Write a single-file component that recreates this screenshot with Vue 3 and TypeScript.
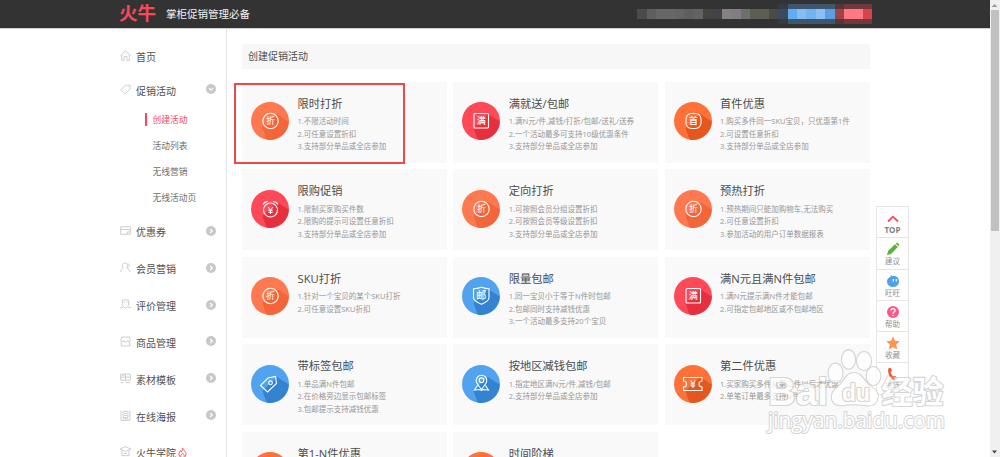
<script setup lang="ts">
type Kind = 'zhe' | 'man' | 'shou' | 'clock' | 'shield' | 'tag' | 'pin' | 'ticket'
interface Card { title: string; tone: string; kind: Kind; lines: string[] }

const cards: Card[] = [
  { title: '限时打折', tone: 'coral', kind: 'zhe', lines: ['1.不限活动时间', '2.可任意设置折扣', '3.支持部分单品或全店参加'] },
  { title: '满就送/包邮', tone: 'red', kind: 'man', lines: ['1.满N元/件,减钱/打折/包邮/送礼/送券', '2.一个活动最多可支持10级优惠条件', '3.支持部分单品或全店参加'] },
  { title: '首件优惠', tone: 'orange', kind: 'shou', lines: ['1.购买多件同一SKU宝贝，只优惠第1件', '2.可设置任意折扣', '3.支持部分单品或全店参加'] },
  { title: '限购促销', tone: 'red', kind: 'clock', lines: ['1.限制买家购买件数', '2.限购的提示可设置任意折扣', '3.支持部分单品或全店参加'] },
  { title: '定向打折', tone: 'coral', kind: 'zhe', lines: ['1.可按照会员分组设置折扣', '2.可按照会员等级设置折扣', '3.支持部分单品或全店参加'] },
  { title: '预热打折', tone: 'coral', kind: 'zhe', lines: ['1.预热期间只能加购物车,无法购买', '2.可任意设置折扣', '3.参加活动的用户订单数据报表'] },
  { title: 'SKU打折', tone: 'coral', kind: 'zhe', lines: ['1.针对一个宝贝的某个SKU打折', '2.可任意设置SKU折扣'] },
  { title: '限量包邮', tone: 'blue', kind: 'shield', lines: ['1.同一宝贝小于等于N件时包邮', '2.包邮同时支持减钱优惠', '3.一个活动最多支持20个宝贝'] },
  { title: '满N元且满N件包邮', tone: 'red', kind: 'man', lines: ['1.满N元提示满N件才能包邮', '2.可指定包邮地区或不包邮地区'] },
  { title: '带标签包邮', tone: 'blue', kind: 'tag', lines: ['1.单品满N件包邮', '2.在价格旁边显示包邮标签', '3.包邮提示支持减钱优惠'] },
  { title: '按地区减钱包邮', tone: 'blue', kind: 'pin', lines: ['1.指定地区满N元/件,减钱/包邮', '2.支持部分单品或全店参加'] },
  { title: '第二件优惠', tone: 'orange', kind: 'ticket', lines: ['1.买家购买多件从第二件以后才优惠', '2.单笔订单最多支持N件'] },
  { title: '第1-N件优惠', tone: 'orange', kind: 'shou', lines: [] },
  { title: '时间阶梯', tone: 'orange', kind: 'zhe', lines: [] },
]

const subs = ['创建活动', '活动列表', '无线营销', '无线活动页']

const menu = [
  { label: '优惠券', d: 'M1 2.500h14v11H1zM1 6.500h14M10.500 10h4.500M10.500 10v3' },
  { label: '会员营销', d: 'M7 1.500a4 4 0 0 1 2.500 7.200c2.500 1 4.500 2.800 5 5.800M7 1.500a4 4 0 0 0-2.300 7.200C2.500 9.700 1.300 11.500 1 14.500M11 2c3 1 3 4.500 1 6' },
  { label: '评价管理', d: 'M3.500 1.500h9v8l-2.500 2.500-2 1.500-2-1.500-2.500-2.500zM0 12.500h4M12 12.500h4M6 4v1.500M10 4v1.500' },
  { label: '商品管理', d: 'M2.500 1.500h11l1.500 5c0 3-3.500 3-3.500 0 0 3-7 3-7 0 0 3-3.500 3-3.500 0zM2 9v5.500h12V9' },
  { label: '素材模板', d: 'M1 1.500h14v9H1zM8 1.500v9M1 6h14M3 3.500h3M1 14h4M8 14h7' },
  { label: '在线海报', d: 'M1.500 1v14h13V1M4.500 2h7v9h-7zM6 5h4M6 8h4M4 13h8' },
]

const pixels = ['#4b4b4b', '#5f5f5f', '#69666b', '#686768', '#626465', '#5d5f62', '#636361', '#444440', '#434347', '#858380', '#847c84', '#6c706f', '#5c5d53', '#5c5e55', '#4a4b48', '#3a4b5e', '#61acf3', '#87bdf3', '#73b3f1', '#8bbff2', '#5a9fe0', '#a04348', '#ff7983', '#ff7983', '#d9434d']
const halo = (i: number): string => (i < 15 ? 'transparent' : i < 16 ? '#333b43' : i < 21 ? '#3e576e' : i < 22 ? '#5a3538' : '#71383d')

const tools = ['TOP', '建议', '旺旺', '帮助', '收藏', '电话']
</script>

<template>
  <div class="page">
    <header class="top">
      <svg class="logo" viewBox="0 0 38 20"><text x="0" y="16.300" textLength="37" lengthAdjust="spacingAndGlyphs">火牛</text></svg>
      <span class="slogan">掌柜促销管理必备</span>
      <div class="account">
        <i v-for="(c, i) in pixels" :key="i" class="px" :style="{ background: halo(i) }"><b :style="{ background: c }"></b></i>
      </div>
    </header>

    <div class="body">
      <nav class="side">
        <div class="item home">
          <svg class="ico" viewBox="0 0 16 16"><path d="M1 8l7-7 7 7M2.500 7v8h3.500V9.500h4V15h3.500V7" /></svg>
          <span>首页</span>
        </div>
        <div class="item promo">
          <svg class="ico" viewBox="0 0 16 16"><path d="M1 8.500l7-6.500 6.500-.5.500 5.500-8 7.500zM11.500 4.500h.8" /></svg>
          <span>促销活动</span>
          <svg class="arrow" viewBox="0 0 10 10"><circle cx="5" cy="5" r="5" /><path d="M3 4.200l2 2 2-2" /></svg>
        </div>
        <ul class="subs">
          <li v-for="(s, i) in subs" :key="s" :class="{ on: i === 0 }">{{ s }}</li>
        </ul>
        <div v-for="m in menu" :key="m.label" class="item">
          <svg class="ico" viewBox="0 0 16 16"><path :d="m.d" /></svg>
          <span>{{ m.label }}</span>
          <svg class="arrow" viewBox="0 0 10 10"><circle cx="5" cy="5" r="5" /><path d="M4.200 3l2 2-2 2" /></svg>
        </div>
        <div class="item">
          <svg class="ico" viewBox="0 0 16 16"><path d="M0 4.500L8 1l8 3.500L8 8zM3 6.500V14h10V6.500M5.500 11h5" /></svg>
          <span>火牛学院</span>
          <svg class="fire" viewBox="0 0 10 12"><path d="M5 1C6 3.500 9 5 9 8a4 3.500 0 0 1-8 0c0-2 1-2.500 1.500-4 .8.500 1 1 1 1.500C4.500 4.500 5 3 5 1zM3 10c0-2 2-2 2-3.500C6 8 7 8.500 7 10" /></svg>
        </div>
      </nav>

      <main class="main">
        <h1>创建促销活动</h1>
        <div class="grid">
          <section v-for="(c, i) in cards" :key="c.title" class="card">
            <svg class="badge" :class="c.tone" viewBox="0 0 38 38">
              <circle class="disc" cx="19" cy="19" r="19" />
              <path class="shade" d="M26 12l11.700 7.500A19 19 0 0 1 15.500 37.600L11.500 26z" />
              <g v-if="c.kind === 'zhe'"><circle class="ln" cx="19.500" cy="19" r="7.700" /><text x="19.500" y="22.400">折</text></g>
              <g v-else-if="c.kind === 'man'"><rect class="ln" x="12" y="11.500" width="14.500" height="14.500" rx="1" /><text class="bold" x="19.300" y="22.200">满</text></g>
              <g v-else-if="c.kind === 'shou'"><rect class="ln" x="12" y="11.500" width="15" height="15" rx="5.500" /><text class="bold" x="19.500" y="22.400">首</text></g>
              <g v-else-if="c.kind === 'clock'"><circle class="ln" cx="19.500" cy="20" r="7" /><path class="ln" d="M12 14.500c1-2 3-3 5-3M27 14.500c-1-2-3-3-5-3M17 17l2.500 3 2.500-3M19.500 20v4M17.300 20.300h4.400M17.300 22.300h4.400" /></g>
              <g v-else-if="c.kind === 'shield'"><path class="ln" d="M11.500 11.700c3 0 5-.5 8-1.500 3 1 5 1.500 7.500 1.500v9c0 3-4 5-7.500 6.500-3.500-1.500-8-3.500-8-6.500z" /><text class="bold small" x="19.300" y="22.400">邮</text></g>
              <g v-else-if="c.kind === 'tag'"><path class="ln" d="M9.500 20.500l7.500-7.500 7.500-1.500 1 7-9 8.500z" /><circle class="ln" cx="19.500" cy="17.800" r="1.900" /></g>
              <g v-else-if="c.kind === 'pin'"><path class="ln" d="M19.500 24.500c-2.500-3.500-5.300-6-5.300-9a5.300 5.300 0 0 1 10.600 0c0 3-2.800 5.500-5.300 9zM15.500 20.500l-3 4.500 5-.5 2 1 2-1 5 .5-3-4.500" /><circle class="ln" cx="19.500" cy="15.200" r="2.300" /></g>
              <g v-else><path class="ln" d="M9.500 12.500h18.500v3.500a3 3 0 0 0 0 6v3.500H9.500V22a3 3 0 0 0 0-6zM16.500 15.500l2.400 3 2.400-3M18.900 18.500v4.500M16.700 18.900h4.400M16.700 20.900h4.400" /></g>
            </svg>
            <div class="copy">
              <h2>{{ c.title }}</h2>
              <p v-for="l in c.lines" :key="l">{{ l }}</p>
            </div>
            <div v-if="i === 0" class="mark"></div>
          </section>
        </div>
      </main>
    </div>

    <aside class="float">
      <div v-for="(t, i) in tools" :key="t" class="tool">
        <svg viewBox="0 0 14 14">
          <path v-if="i === 0" d="M2 10.500l5-4.800 5 4.800" fill="none" stroke="#fb4759" stroke-width="1.800" />
          <path v-else-if="i === 1" d="M1 13l1-4L9 2.300 11.800 5 5 12zM9.700 1.600l1-.8c.8-.4 2.900 1.500 2.500 2.500l-.8 1z" fill="#57b52f" />
          <g v-else-if="i === 2"><path d="M4.500 1l2.200 1.200C11 1.500 13 4.500 13 7.500a6 5.600 0 0 1-12 0C1 5 2.500 3.300 4.800 2.700z" fill="#4da0ea" /><path d="M7.300 5v2.500M10.300 5v2.500" stroke="#fff" stroke-width="1.200" /></g>
          <g v-else-if="i === 3"><circle cx="7" cy="7" r="6" fill="#fd5688" /><path d="M4.900 5.600c0-2.700 4.200-2.500 4.200 0C9.100 7 7 7 7 8.600M7 9.700v1.400" fill="none" stroke="#fff" stroke-width="1.400" /></g>
          <path v-else-if="i === 4" d="M7 .3l2 4.500 4.800.5-3.600 3.300 1 5L7 11.200l-4.200 2.400 1-5L.2 5.300 5 4.800z" fill="#ff9550" />
          <path v-else d="M2.500 1.300l2.200-.5 1.200 3-1.300 1.300c.5 2 1.500 3.500 3 4.500l1.700-.7 2 2.500-1.800 1.900C5 13.500.8 6.500 2.500 1.300z" fill="#f0592b" />
        </svg>
        <span :class="{ strong: i === 0 }">{{ t }}</span>
      </div>
    </aside>

    <div class="scroll">
      <svg viewBox="0 0 11 10"><path d="M2.500 7L5.500 4l3 3z" fill="#999" /></svg>
      <div class="thumb"></div>
      <svg class="down" viewBox="0 0 11 10"><path d="M3 3.500h5L5.500 6.500z" fill="#444" /></svg>
    </div>

    <svg class="water" viewBox="0 0 190 100">
      <g class="wm">
        <text class="latin" x="8" y="65" font-size="38" textLength="60" lengthAdjust="spacingAndGlyphs">Bai</text>
        <ellipse cx="75.500" cy="33" rx="7" ry="9.500" />
        <ellipse cx="88.500" cy="19.500" rx="6.500" ry="9.300" />
        <ellipse cx="104" cy="21" rx="7" ry="9" />
        <ellipse cx="113.500" cy="36" rx="6.800" ry="9" />
        <path d="M94 33c8 0 9 8 16 13 7 4 9 8 7 14-2 6-8 6-13 5-6-1-14-1-20 0-6 1-11-1-12-6-1-6 3-10 7-13 6-5 7-13 15-13z" />
        <text class="latin" x="82" y="60.500" font-size="23" textLength="28" lengthAdjust="spacingAndGlyphs">du</text>
        <text x="121.500" y="63" font-size="31" textLength="62" lengthAdjust="spacingAndGlyphs">经验</text>
        <text class="url" x="8" y="87.500" font-size="21" textLength="177" lengthAdjust="spacingAndGlyphs">jingyan.baidu.com</text>
      </g>
    </svg>
  </div>
</template>

<style>
html, body { margin: 0; overflow: hidden; background: #fff; }
</style>

<style scoped>
.page { position: relative; width: 1000px; height: 457px; overflow: hidden; background: #fff; color: #505050; font-family: "Open Sans", "Noto Sans CJK SC", sans-serif; }
.top { box-sizing: border-box; width: 990px; height: 29px; padding-left: 119px; display: flex; align-items: flex-start; background: #333; border-bottom: 1px solid #d0d0d0; }
.logo { width: 38px; height: 20px; margin-top: 4px; overflow: visible; }
.logo text { font: 700 18px "Noto Sans CJK SC", sans-serif; fill: #fb4759; }
.slogan { width: 88px; margin-left: 9px; line-height: 28px; font-size: 10.500px; white-space: nowrap; color: #f2f2f2; }
.account { display: flex; margin: 4px 0 0 383.300px; }
.px { width: 9.400px; height: 20px; display: flex; align-items: center; }
.px b { width: 100%; height: 10px; }
.body { display: flex; height: 428px; }
.side { box-sizing: border-box; width: 227px; height: 428px; overflow: hidden; flex: none; padding: 9.500px 10px 0 120px; border-right: 1px solid #e3e3e3; }
.item { display: flex; align-items: center; height: 36.850px; font-size: 10px; color: #505050; }
.home { height: 35px; }
.promo { height: 31.400px; padding-top: 1px; }
.ico { width: 11px; height: 11px; margin: -2px 5.500px 0 -.5px; fill: none; stroke: #c8c8c8; stroke-width: 1.300; }
.arrow { width: 10px; height: 10px; margin: -2px 0 0 auto; fill: #c8c8c8; }
.arrow path { fill: none; stroke: #fff; stroke-width: 1.200; }
.fire { width: 9px; height: 11px; margin-left: 2px; fill: none; stroke: #fb5060; stroke-width: 1; }
.subs { list-style: none; margin: 0 0 2.600px; padding: 0; }
.subs li { height: 26.250px; display: flex; align-items: center; padding-left: 32.500px; font-size: 8.750px; color: #6c6c6c; }
.subs .on { color: #fb4759; }
.subs .on::before { content: ""; width: 2px; height: 13px; margin: 0 5.500px 0 -7.500px; background: #fb4759; }
.main { padding: 15px 0 0 15px; }
h1 { width: 622px; height: 25px; margin: 0 0 12.500px; padding-left: 6px; font-size: 10px; line-height: 25px; font-weight: 400; background: #f7f7f7; }
.grid { display: grid; grid-template-columns: repeat(3, 205px); grid-auto-rows: 81.250px; gap: 6.250px; column-gap: 6.300px; }
.card { position: relative; display: flex; background: #f9f9f9; }
.badge { width: 38px; height: 38px; margin: 20.900px 8.500px 0 9px; flex: none; }
.badge text { font: 400 9px "Noto Sans CJK SC", sans-serif; text-anchor: middle; fill: #fff; }
.badge .bold { font-weight: 500; }
.badge .small { font-size: 10px; }
.ln { fill: none; stroke: #fff; stroke-width: 1.100; }
.coral .disc { fill: #ff7950; } .coral .shade { fill: #f3663a; }
.red .disc { fill: #ff4959; } .red .shade { fill: #e6303e; }
.orange .disc { fill: #ff7138; } .orange .shade { fill: #e5571f; }
.blue .disc { fill: #52a3ef; } .blue .shade { fill: #3483d0; }
.copy { padding-top: 14px; white-space: nowrap; }
h2 { margin: 0 0 4.500px; font-size: 11.250px; line-height: 15px; font-weight: 400; color: #4c4c4c; }
p { margin: 0; font-size: 7.500px; line-height: 12.500px; color: #969696; }
.mark { position: absolute; box-sizing: border-box; left: -8px; top: 1px; width: 171px; height: 81.500px; border: 2px solid #f04848; }
.float { position: absolute; left: 876px; top: 206px; width: 31px; border: 1px solid #e5e5e5; border-bottom: 0; background: #fff; }
.tool { box-sizing: border-box; height: 31.300px; display: flex; flex-direction: column; align-items: center; padding-top: 4px; border-bottom: 1px solid #e5e5e5; }
.tool svg { width: 14px; height: 14px; flex: none; }
.tool span { font-size: 7.500px; line-height: 10px; color: #929292; white-space: nowrap; }
.tool .strong { font-size: 8px; font-weight: 700; color: #808080; }
.scroll { position: absolute; right: 0; top: 0; width: 10.500px; height: 457px; display: flex; flex-direction: column; align-items: center; background: #f0f0f0; }
.scroll svg { width: 11px; height: 10px; flex: none; }
.thumb { width: 8px; height: 221px; background: #c1c1c1; }
.scroll .down { margin-top: auto; }
.water { position: absolute; left: 760px; top: 340px; width: 190px; height: 100px; }
.wm { opacity: .72; fill: #fff; stroke: #c6c6c6; stroke-width: 2.200; stroke-linejoin: round; paint-order: stroke; }
.wm text { font-family: "Noto Sans CJK SC", sans-serif; font-weight: 700; }
.wm .latin { font-family: "Liberation Sans", sans-serif; font-weight: 700; }
.wm .url { font-family: "Open Sans", sans-serif; font-weight: 400; stroke-width: 2; }
</style>
